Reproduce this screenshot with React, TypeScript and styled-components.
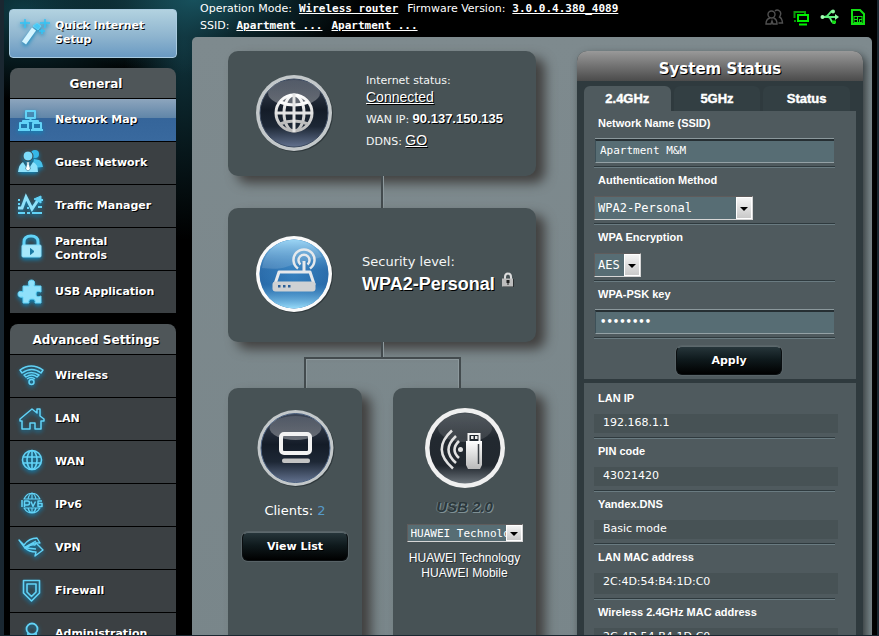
import React from 'react';
import styled, { createGlobalStyle, css } from 'styled-components';

const verdana = '"DejaVu Sans", Verdana, sans-serif';
const arial = '"Liberation Sans", Arial, sans-serif';
const mono = '"DejaVu Sans Mono", "Lucida Console", monospace';

const GlobalStyle = createGlobalStyle`
  * { box-sizing: border-box; }
  body { margin: 0; background: #000; color: #fff; font-family: ${verdana}; font-size: 11px; }
  h2, p, dl, dd, dt { margin: 0; }
  a { color: inherit; }
`;

/* ---------- frame ---------- */

const Frame = styled.div`
  display: flex;
  height: 100vh;
  overflow-y: auto;
  scrollbar-width: none;
  border: solid #1a2731;
  border-width: 0 2px 1px 4px;
  background:
    radial-gradient(ellipse 170px 75px at 190px 0, #17505c 0%, rgba(18, 60, 70, 0.6) 50%, transparent 100%),
    radial-gradient(ellipse 150px 90px at 20px 10px, #0e3a44 0%, transparent 100%),
    radial-gradient(ellipse 60px 200px at 180px 40px, #10343d 0%, transparent 100%),
    #000;
`;

const Sidebar = styled.aside`
  flex: none;
  width: 188px;
  padding: 9px 15px 0 6px;
`;

const Content = styled.div`
  flex: 1;
  min-width: 0;
  display: flex;
  flex-direction: column;
  padding-right: 5px;
`;

/* ---------- sidebar ---------- */

const navText = css`
  font-weight: bold;
  line-height: 14px;
  color: #fff;
  text-decoration: none;
  text-shadow: 1px 1px 0 #000;
`;

const QuickSetup = styled.a`
  ${navText}
  display: flex;
  align-items: center;
  gap: 9px;
  height: 49px;
  margin-left: -1px;
  padding: 0 20px 2px 10px;
  border: 1px solid #a9cbe0;
  border-radius: 4px;
  background: linear-gradient(#b2d2e0, #8fb5cf 55%, #6a9ac2);
  font-size: 11px;
`;

const NavGroup = styled.nav<{ $gap: number }>`
  margin: ${(p) => p.$gap}px 1px 0 0;
`;

const NavTitle = styled.h2`
  height: 30px;
  padding-left: 6px;
  border-radius: 8px 8px 0 0;
  background: #4f5659;
  text-align: center;
  font-size: 12px;
  line-height: 33px;
  text-shadow: 1px 1px 0 #000;
`;

const NavItem = styled.a<{ $active?: boolean }>`
  ${navText}
  display: flex;
  align-items: center;
  gap: 11px;
  height: 43px;
  padding: 0 16px 0 8px;
  border-top: 1px solid #000;
  background: ${(p) =>
    p.$active ? 'linear-gradient(#8da5bd, #5f85a8 46%, #35659a 46%, #39699e)' : '#3b4043'};
  font-size: 11px;
`;

const Glyph = styled.svg`
  flex: none;
  width: 26px;
  height: 30px;
  overflow: visible;
  fill: none;
  stroke: #62d3f7;
  stroke-width: 2;
  stroke-linejoin: round;
  filter: drop-shadow(0 2px 2px #0d86bb);
`;

const icons: Record<string, React.ReactNode> = {
  map: (
    <g>
      <rect x="8" y="6" width="9" height="7" />
      <path d="M12.5 13v4M5 19v-3h15v3" />
      <rect x="2" y="18" width="8" height="6" />
      <rect x="15" y="18" width="8" height="6" />
      <path d="M0 25h12M13 25h12" />
    </g>
  ),
  guest: (
    <g stroke="none">
      <circle cx="17" cy="6" r="4" fill="#35b8e8" />
      <path d="M14 20l2-9 5 1q3 1 4 7z" fill="#46bfe8" />
      <circle cx="10" cy="8" r="5" fill="#7cdcfb" stroke="#3b4043" strokeWidth="1" />
      <path d="M0 24q1-8 5-10l5 8 5-8q5 2 5 10z" fill="#8fe2fb" />
      <path d="M8.500 14h3l-.5 2 1.500 5-2.500 2-2.500-2 1.500-5z" fill="#fff" stroke="#2a6f8c" strokeWidth="0.6" />
    </g>
  ),
  traffic: (
    <g>
      <path d="M0 17h4l4-11 6 12 6-9" strokeWidth="3" stroke="#8fe2fb" strokeLinejoin="miter" />
      <path d="M16 8l7-3v7z" fill="#62d3f7" strokeWidth="1" />
      <path d="M0 22h7M9 22h3M14 22h10" />
      <path d="M0 9h2M0 13h2M20 16h4M23 9h2M9 17h2" />
    </g>
  ),
  parental: (
    <g>
      <path d="M6 13V8q0-6 7-6t7 6v5" strokeWidth="3" />
      <rect x="4" y="11" width="19" height="12" rx="1" fill="#a6e8fb" stroke="#8adffa" strokeWidth="1" />
      <path d="M12.500 14.500l3.500 3-3.500 3z" fill="#187aa5" stroke="#187aa5" strokeWidth="1" />
    </g>
  ),
  usb: (
    <path
      d="M5 9h6q-2-6 2.500-6t2.500 6h7v6q-5-2-5 2t5 2v7h-6q1-4-3-4t-3 4H5v-6q-5 1-5-3t5-2z"
      fill="#8fe0fa"
      stroke="#62d3f7"
      strokeWidth="1"
    />
  ),
  wireless: (
    <g strokeWidth="1.500">
      <path d="M2 9q11-8 23 0l-2 3q-9-7-19 0z" />
      <path d="M6 14q7-5 15 0l-2 2q-5-4-11 0z" />
      <path d="M9 18q4-3 8 0" />
      <circle cx="13.500" cy="21" r="2.500" />
    </g>
  ),
  lan: (
    <path
      d="M4 25V17H2v-2L14 5l5 4V5h3v7l4 3v2h-3v8h-6v-6h-5v6z"
      strokeWidth="1.500"
    />
  ),
  wan: (
    <g strokeWidth="1.600">
      <circle cx="14" cy="13" r="9.500" />
      <ellipse cx="14" cy="13" rx="5" ry="9.500" />
      <path d="M14 4v19M5 10h18M5 16h18" />
    </g>
  ),
  ipv6: (
    <g strokeWidth="1.200">
      <path d="M6 9q3-6 8-6t8 6zM10 9q1-5 4-6 3 1 4 6M6 18q3 5 8 5t8-5zM10 18q1 4 4 5 3-1 4-5M14 3v6M14 18v5" />
      <path d="M4 10v7M6.500 17v-6h3q2 0 2 2t-2 2h-3M13 11.500l2 5 2.500-5M24 11h-4v5.500h4v-3h-4" strokeWidth="1.500" />
    </g>
  ),
  vpn: (
    <g strokeWidth="1.400">
      <path d="M1 7l5 5q5-7 13-7l3 5q-8-1-12 4l-3 1z" />
      <path d="M7 15q5-4 10-3l1-2 7 7-8 6 1-4q-7 0-11-4z" />
      <path d="M7 14l11-6M8 15l10 1" />
    </g>
  ),
  firewall: (
    <g strokeWidth="1.600">
      <path d="M5.500 4.500h16v12.500l-8 8-8-8z" />
      <path d="M9 8h9v8l-4.500 4.500L9 16z" />
    </g>
  ),
  admin: (
    <g strokeWidth="1.800">
      <circle cx="14" cy="10" r="5.500" />
      <path d="M10 14v3q-6 2-6 8h20q0-6-6-8v-3" />
    </g>
  ),
};

type NavEntry = { label: string; icon: string; active?: boolean };

const general: NavEntry[] = [
  { label: 'Network Map', icon: 'map', active: true },
  { label: 'Guest Network', icon: 'guest' },
  { label: 'Traffic Manager', icon: 'traffic' },
  { label: 'Parental Controls', icon: 'parental' },
  { label: 'USB Application', icon: 'usb' },
];

const advanced: NavEntry[] = [
  { label: 'Wireless', icon: 'wireless' },
  { label: 'LAN', icon: 'lan' },
  { label: 'WAN', icon: 'wan' },
  { label: 'IPv6', icon: 'ipv6' },
  { label: 'VPN', icon: 'vpn' },
  { label: 'Firewall', icon: 'firewall' },
  { label: 'Administration', icon: 'admin' },
];

function NavSection({ title, items, gap }: { title: string; items: NavEntry[]; gap: number }) {
  return (
    <NavGroup $gap={gap}>
      <NavTitle>{title}</NavTitle>
      {items.map((item) => (
        <NavItem key={item.label} href="#" $active={item.active}>
          <Glyph viewBox="0 0 26 30">{icons[item.icon]}</Glyph>
          {item.label}
        </NavItem>
      ))}
    </NavGroup>
  );
}

/* ---------- top bar ---------- */

const TopBar = styled.header`
  flex: none;
  display: flex;
  justify-content: space-between;
  height: 37px;
  padding: 0 4px 0 8px;
  white-space: nowrap;
`;

const InfoLine = styled.p`
  display: flex;
  gap: 7px;
  line-height: 17px;
`;

const MonoLink = styled.a`
  margin-right: 2px;
  font-family: ${mono};
  font-weight: bold;
`;

const StatusIcons = styled.div`
  display: flex;
  gap: 8px;
  padding-top: 7px;
`;

const StatusIcon = styled.svg`
  width: 20px;
  height: 20px;
  fill: none;
  stroke: #12e012;
  stroke-width: 2;
`;

/* ---------- map ---------- */

const Main = styled.main`
  flex: 1 0 auto;
  display: flex;
  gap: 41px;
  padding: 14px 9px 0 36px;
  border-radius: 5px 5px 0 0;
  background: linear-gradient(#7e8a8e, #79868a);
`;

const MapColumn = styled.section`
  flex: 1;
  min-width: 0;
  display: flex;
  flex-direction: column;
`;

const cardBase = css`
  background: #475255;
  box-shadow: 9px 7px 12px #41403f;
`;

const NodeCard = styled.div<{ $height: number; $gap: number }>`
  ${cardBase}
  display: flex;
  align-items: center;
  gap: ${(p) => p.$gap}px;
  min-height: ${(p) => p.$height}px;
  padding: 0 10px 2px 26px;
  border-radius: 10px;
`;

const Stem = styled.div<{ $height: number }>`
  align-self: center;
  width: 3px;
  height: ${(p) => p.$height}px;
  border-right: 1px solid #8d999d;
  background: #434b4e;
`;

const Branch = styled.div`
  height: 31px;
  margin: 0 75px 0 76px;
  border: solid #434b4e;
  border-width: 2px 2px 0;
  box-shadow: inset 1px 1px 0 #8d999d, inset -1px 0 0 #8d999d;
`;

const Leaves = styled.div`
  flex: 1;
  display: grid;
  grid-template-columns: 134fr 143fr;
  gap: 31px;
`;

const Leaf = styled.div`
  ${cardBase}
  display: flex;
  flex-direction: column;
  align-items: center;
  min-width: 0;
  padding-top: 20px;
  border-radius: 10px 10px 0 0;
`;

const Disc = styled.svg`
  flex: none;
  width: 80px;
  height: 80px;
`;

const NodeText = styled.div`
  display: flex;
  flex-direction: column;
`;

const NodeLine = styled.p<{ $line: number; $size?: number }>`
  font-size: ${(p) => p.$size ?? 11}px;
  line-height: ${(p) => p.$line}px;
  color: #f4f6f6;
`;

const strongText = css`
  font-family: ${arial};
  font-weight: bold;
  font-size: 13px;
  color: #fff;
  text-shadow: 1px 1px 0 #000;
`;

const StrongLink = styled.a`
  ${strongText}
  font-size: 14px;
  font-weight: normal;
`;

const Strong = styled.strong`
  ${strongText}
`;

const Level = styled.p`
  ${strongText}
  display: flex;
  gap: 6px;
  font-size: 18px;
  line-height: 24px;
`;

const LockIcon = styled.svg`
  width: 14px;
  height: 16px;
`;

const Clients = styled.p`
  padding: 13px 0 12px;
  font-size: 13px;
  line-height: 19px;
`;

const Count = styled.span`
  color: #569ac9;
`;

const Button = styled.button`
  width: 106px;
  height: 29px;
  padding: 0;
  border: 1px solid #0a0e10;
  border-top-color: #5d696d;
  border-radius: 6px;
  background: linear-gradient(#26353a, #0f1a1d 45%, #000);
  box-shadow: 0 0 0 1px #586367;
  color: #fff;
  font: bold 11px ${verdana};
  text-shadow: 1px 1px 0 #000;
`;

const UsbLabel = styled.p`
  padding: 9px 0 7px;
  font: italic bold 15px/20px ${arial};
  color: #2b373b;
  text-shadow: 1px 1px 0 #7f9094, -1px 0 0 #65757a;
`;

const Device = styled.p`
  padding-top: 9px;
  font: 12px/15px ${arial};
  text-align: center;
  text-shadow: 1px 1px 0 #2b3235;
`;

/* ---------- form parts ---------- */

const SelectBox = styled.div<{ $width: number; $height: number }>`
  display: grid;
  grid-template-columns: 1fr 16px;
  width: ${(p) => p.$width}px;
  height: ${(p) => p.$height}px;
  border: 1px solid;
  border-color: #5f5c5c #d6d6d6 #d6d6d6 #5f5c5c;
  background: #576d74;
`;

const NativeSelect = styled.select<{ $size: number }>`
  grid-area: 1 / 1 / 2 / 3;
  width: 100%;
  min-width: 0;
  height: 100%;
  padding: 0 16px 0 3px;
  border: 0;
  appearance: none;
  background: transparent;
  color: #fff;
  font: ${(p) => p.$size}px ${mono};
`;

const Arrow = styled.svg`
  grid-area: 1 / 2 / 2 / 3;
  width: 16px;
  height: 100%;
  border: 1px solid #fff;
  background: linear-gradient(#f4f4f4, #c9c9c9);
  pointer-events: none;
`;

type SelectProps = { id: string; label?: string; value: string; width: number; height: number; size: number };

function Select({ id, label, value, width, height, size }: SelectProps) {
  return (
    <SelectBox $width={width} $height={height}>
      <NativeSelect id={id} aria-label={label} $size={size}>
        <option>{value}</option>
      </NativeSelect>
      <Arrow viewBox="0 0 14 14">
        <path d="M3 6h8l-4 4z" fill="#000" />
      </Arrow>
    </SelectBox>
  );
}

/* ---------- system status ---------- */

const Status = styled.section`
  flex: none;
  width: 286px;
  border-radius: 10px 10px 0 0;
  background: #2f3a3e;
  box-shadow: 3px 4px 9px #33393b;
`;

const StatusTitle = styled.h2`
  height: 30px;
  border-radius: 10px 10px 0 0;
  background: linear-gradient(#999, #4b4b4b);
  text-align: center;
  font-size: 15px;
  line-height: 37px;
  text-shadow: 1px 1px 0 #000;
`;

const Tabs = styled.div`
  display: flex;
  gap: 3px;
  padding: 5px 13px 0 7px;
`;

const Tab = styled.button<{ $active?: boolean }>`
  flex: 1;
  height: 25px;
  padding: 0;
  border: 0;
  border-radius: 6px 6px 0 0;
  background: ${(p) => (p.$active ? '#4f5a5e' : '#333f43')};
  color: #fff;
  font: bold 13px ${arial};
  -webkit-text-stroke: 0.4px #fff;
`;

const Block = styled.div<{ $top?: number }>`
  margin: 0 7px 4px;
  padding: ${(p) => p.$top ?? 0}px 21px 0 10px;
  background: #4f5a5e;
`;

const Row = styled.div`
  padding: 5px 0 3px;
  border-bottom: 1px solid #6a7b81;
  box-shadow: inset 0 -1px 0 #2f3a3e;
`;

const labelText = css`
  display: block;
  padding-left: 4px;
  font: bold 11px/15px ${arial};
  color: #fff;
`;

const Label = styled.label`
  ${labelText}
`;

const FieldSlot = styled.div`
  padding: 8px 0 1px;
`;

const TextInput = styled.input`
  display: block;
  width: calc(100% - 2px);
  height: 24px;
  margin-left: 1px;
  padding: 0 4px 2px;
  border: solid;
  border-width: 2px 0 1px 1px;
  border-color: #262f33 #8b989c #94a1a5 #3d5058;
  border-radius: 0;
  outline: 0;
  background: #576d74;
  box-shadow: 0 -1px 0 #8b989c;
  color: #fff;
  font: 11px ${mono};

  &[type='password'] {
    font: bold 10px ${verdana};
  }
`;

const ApplySlot = styled.div`
  display: flex;
  justify-content: center;
  padding: 7px 0 4px 29px;
`;

const Term = styled.dt`
  ${labelText}
`;

const Value = styled.dd<{ $tall?: boolean }>`
  height: ${(p) => (p.$tall ? 21 : 19)}px;
  margin: 8px -3px 2px 0;
  padding-left: 9px;
  background: #475255;
  font-size: 11px;
  line-height: 18px;
`;

const facts = [
  { term: 'LAN IP', value: '192.168.1.1' },
  { term: 'PIN code', value: '43021420' },
  { term: 'Yandex.DNS', value: 'Basic mode' },
  { term: 'LAN MAC address', value: '2C:4D:54:B4:1D:C0', tall: true },
  { term: 'Wireless 2.4GHz MAC address', value: '2C:4D:54:B4:1D:C0', tall: true },
];

function Gradients() {
  return (
    <defs>
      <linearGradient id="dark" x1="0" y1="0" x2="0" y2="1">
        <stop offset="0" stopColor="#3d4656" />
        <stop offset="0.45" stopColor="#141c28" />
        <stop offset="0.7" stopColor="#1d2735" />
        <stop offset="1" stopColor="#62718e" />
      </linearGradient>
      <linearGradient id="gloss" x1="0" y1="0" x2="0" y2="1">
        <stop offset="0" stopColor="#fff" stopOpacity="0.12" />
        <stop offset="1" stopColor="#fff" stopOpacity="0.35" />
      </linearGradient>
      <radialGradient id="blue" cx="0.5" cy="0.5" r="0.5">
        <stop offset="0" stopColor="#2d78b8" />
        <stop offset="1" stopColor="#1f5c9c" />
      </radialGradient>
      <linearGradient id="sky" x1="0" y1="0" x2="0" y2="1">
        <stop offset="0" stopColor="#8ed0f4" />
        <stop offset="0.45" stopColor="#4c96cf" stopOpacity="0.3" />
        <stop offset="0.65" stopColor="#3f8cc8" stopOpacity="0.3" />
        <stop offset="1" stopColor="#98dcfa" />
      </linearGradient>
      <linearGradient id="silver" x1="0" y1="0" x2="0" y2="1">
        <stop offset="0" stopColor="#fff" />
        <stop offset="1" stopColor="#b9b9b9" />
      </linearGradient>
      <linearGradient id="black" x1="0" y1="0" x2="0" y2="1">
        <stop offset="0" stopColor="#4a5157" />
        <stop offset="0.35" stopColor="#222930" />
        <stop offset="0.75" stopColor="#22282f" />
        <stop offset="1" stopColor="#6c747b" />
      </linearGradient>
    </defs>
  );
}

export default function App() {
  return (
    <Frame>
      <GlobalStyle />
      <Sidebar>
        <QuickSetup href="#">
          <Glyph viewBox="0 0 26 30">
            <path d="M4 25L14 11" stroke="#d4f5ff" strokeWidth="5" />
            <path d="M13 8l4-3 4 3-3 4z" fill="#48c8f5" strokeWidth="1" />
            <path d="M5 1v9M0 5h10M25 1v9M20 5h10M22 11v5M19 13h6" strokeWidth="1.500" stroke="#35c3f5" />
          </Glyph>
          Quick Internet Setup
        </QuickSetup>
        <NavSection title="General" items={general} gap={10} />
        <NavSection title="Advanced Settings" items={advanced} gap={11} />
      </Sidebar>

      <Content>
        <TopBar>
          <div>
            <InfoLine>
              Operation Mode: <MonoLink href="#">Wireless router</MonoLink>
              Firmware Version: <MonoLink href="#">3.0.0.4.380_4089</MonoLink>
            </InfoLine>
            <InfoLine>
              SSID: <MonoLink href="#">Apartment ...</MonoLink>
              <MonoLink href="#">Apartment ...</MonoLink>
            </InfoLine>
          </div>
          <StatusIcons>
            <StatusIcon viewBox="0 0 20 20">
              <g stroke="#505050" strokeWidth="1.400">
                <circle cx="7.500" cy="7.500" r="3.500" />
                <path d="M6 11q-4 1-4 6h5l1-3 1 3h4q0-5-3.500-6M11 4q2-2 4.500 0t0 6q2.500 1 3 6h-4" />
              </g>
            </StatusIcon>
            <StatusIcon viewBox="0 0 20 20">
              <path d="M2.500 11V5H13v2" stroke="#0a9a0a" />
              <path d="M2 14h2" stroke="#0a8a0a" />
              <rect x="6" y="8" width="10" height="6" stroke="#00f000" />
              <path d="M7 17.500h8" stroke="#00f000" />
            </StatusIcon>
            <StatusIcon viewBox="0 0 20 20">
              <path d="M2 10h14M4 10q3 0 5-3t4-3M8 10q2 0 3 3t4 3" stroke="#5cf07c" strokeWidth="1.800" />
              <circle cx="2.500" cy="10" r="2" fill="#a4ffb4" stroke="none" />
              <circle cx="13" cy="4.500" r="2" fill="#8cf8a0" stroke="none" />
              <path d="M15 7l4 3-4 3z" fill="#8cf8a0" stroke="none" />
              <rect x="12" y="13.500" width="4" height="3" fill="#12e012" stroke="none" />
            </StatusIcon>
            <StatusIcon viewBox="0 0 20 20">
              <path d="M4 3h8l4 4v10H4z" />
              <rect x="6" y="9.500" width="8" height="6" strokeWidth="1" />
              <path d="M6 12.500h3M11 12.500h3M9.500 10v5M11.500 12v3" strokeWidth="1" />
            </StatusIcon>
          </StatusIcons>
        </TopBar>

        <Main>
          <MapColumn>
            <NodeCard $height={125} $gap={32}>
              <Disc viewBox="0 0 80 80">
                <Gradients />
                <circle cx="41" cy="41" r="38" fill="#20282b" opacity="0.6" />
                <circle cx="40" cy="40" r="38" fill="#c3c8ca" />
                <circle cx="40" cy="40" r="34" fill="url(#dark)" stroke="#3c4a60" />
                <ellipse cx="40" cy="20" rx="26" ry="13" fill="url(#gloss)" />
                <g fill="none" stroke="url(#silver)" strokeWidth="3">
                  <circle cx="40" cy="40" r="18" />
                  <ellipse cx="40" cy="40" rx="10" ry="18" />
                  <path d="M26 29q14 6 28 0M26 51q14-6 28 0" />
                </g>
                <path d="M38.500 21h3v38h-3zM21 38.500h38v3H21z" fill="#e4e4e4" />
              </Disc>
              <NodeText>
                <NodeLine $line={14}>Internet status:</NodeLine>
                <NodeLine $line={18}><StrongLink href="#">Connected</StrongLink></NodeLine>
                <NodeLine $line={21}>WAN IP: <Strong>90.137.150.135</Strong></NodeLine>
                <NodeLine $line={21}>DDNS: <StrongLink href="#">GO</StrongLink></NodeLine>
              </NodeText>
            </NodeCard>
            <Stem $height={32} />
            <NodeCard $height={134} $gap={28}>
              <Disc viewBox="0 0 80 80">
                <circle cx="41" cy="41" r="38" fill="#20282b" opacity="0.6" />
                <circle cx="40" cy="40" r="38" fill="#fafafa" />
                <circle cx="40" cy="40" r="34.500" fill="url(#blue)" />
                <circle cx="40" cy="40" r="34.500" fill="url(#sky)" />
                <path d="M8 34a32 32 0 0 1 60-11Q40 30 32 33T8 34z" fill="#fff" opacity="0.13" />
                <g fill="none" stroke="#e6e9ec" strokeWidth="3">
                  <path d="M25 38h31l4 12H21z" strokeLinejoin="round" />
                  <path d="M50 27v11" />
                  <path d="M46.500 30.500a5.500 5.500 0 1 1 7 0" strokeWidth="2.500" />
                  <path d="M44 34.500a10.500 10.500 0 1 1 12 0" strokeWidth="2.500" />
                </g>
                <rect x="18.500" y="47.500" width="43" height="10" rx="3" fill="#cfd1d3" />
                <path d="M24 51h2.500v2.500H24zM29 51h2.500v2.500H29zM34 51h2.500v2.500H34z" fill="#2a5f98" />
              </Disc>
              <NodeText>
                <NodeLine $line={20} $size={13}>Security level:</NodeLine>
                <Level>
                  WPA2-Personal
                  <LockIcon viewBox="0 0 14 16">
                    <path d="M4 8V5q0-3.500 3-3.500T10 5v3" fill="none" stroke="#ddd" strokeWidth="2" />
                    <rect x="2" y="7" width="11" height="8" fill="#2b2f31" />
                    <rect x="1" y="6.500" width="11" height="8" fill="#bdbdbd" />
                    <path d="M5.500 8h3v3h-1v2h-1v-2h-1z" fill="#222" />
                  </LockIcon>
                </Level>
              </NodeText>
            </NodeCard>
            <Stem $height={15} />
            <Branch />
            <Leaves>
              <Leaf>
                <Disc viewBox="0 0 80 80">
                  <circle cx="41.500" cy="41" r="38" fill="#20282b" opacity="0.6" />
                  <circle cx="40.500" cy="40" r="38" fill="#c3c8ca" />
                  <circle cx="40.500" cy="40" r="34.500" fill="url(#dark)" stroke="#4a6080" />
                  <ellipse cx="40.500" cy="20" rx="26" ry="12" fill="url(#gloss)" />
                  <rect x="26" y="26" width="29" height="19" rx="3" fill="none" stroke="#f2f2f2" strokeWidth="4" />
                  <rect x="27" y="50.500" width="28" height="4.500" rx="2" fill="#c4c4c4" />
                </Disc>
                <Clients>
                  Clients: <Count>2</Count>
                </Clients>
                <Button type="button">View List</Button>
              </Leaf>
              <Leaf>
                <Disc viewBox="0 0 80 80">
                  <circle cx="40" cy="40" r="40" fill="#f0f0f0" />
                  <circle cx="40" cy="40" r="35.500" fill="url(#black)" />
                  <ellipse cx="40" cy="20" rx="27" ry="14" fill="url(#gloss)" opacity="0.4" />
                  <g fill="none" stroke="#e2e2e2" strokeWidth="2.600">
                    <path d="M27 22.500q-21 19 1 38" />
                    <path d="M31 28q-15 14 0 27" />
                    <path d="M34 33q-9 9 0 17" />
                  </g>
                  <circle cx="35.500" cy="41.500" r="2.500" fill="#e2e2e2" />
                  <path d="M43.500 26h11v8h-11z" fill="#222930" stroke="#f2f2f2" strokeWidth="2" />
                  <path d="M46 28h2.500v3H46zM50 28h2.500v3H50z" fill="#eee" />
                  <path d="M41 33h16v24l-2 4H43l-2-4z" fill="url(#silver)" />
                  <path d="M53.500 36v20" stroke="#3a3f44" strokeWidth="1.500" />
                </Disc>
                <UsbLabel>USB 2.0</UsbLabel>
                <Select id="usb-device" label="USB device" value="HUAWEI Technology" width={116} height={18} size={11} />
                <Device>
                  HUAWEI Technology
                  <br />
                  HUAWEI Mobile
                </Device>
              </Leaf>
            </Leaves>
          </MapColumn>

          <Status>
            <StatusTitle>System Status</StatusTitle>
            <Tabs role="tablist">
              <Tab type="button" role="tab" aria-selected $active>2.4GHz</Tab>
              <Tab type="button" role="tab">5GHz</Tab>
              <Tab type="button" role="tab">Status</Tab>
            </Tabs>
            <Block>
              <Row>
                <Label htmlFor="ssid">Network Name (SSID)</Label>
                <FieldSlot><TextInput id="ssid" type="text" defaultValue="Apartment M&M" /></FieldSlot>
              </Row>
              <Row>
                <Label htmlFor="auth">Authentication Method</Label>
                <FieldSlot><Select id="auth" value="WPA2-Personal" width={159} height={24} size={12} /></FieldSlot>
              </Row>
              <Row>
                <Label htmlFor="encryption">WPA Encryption</Label>
                <FieldSlot><Select id="encryption" value="AES" width={47} height={24} size={12} /></FieldSlot>
              </Row>
              <Row>
                <Label htmlFor="psk">WPA-PSK key</Label>
                <FieldSlot><TextInput id="psk" type="password" defaultValue="password" /></FieldSlot>
              </Row>
              <ApplySlot>
                <Button type="button">Apply</Button>
              </ApplySlot>
            </Block>
            <Block as="dl" $top={3}>
              {facts.map((fact) => (
                <Row key={fact.term}>
                  <Term>{fact.term}</Term>
                  <Value $tall={fact.tall}>{fact.value}</Value>
                </Row>
              ))}
            </Block>
          </Status>
        </Main>
      </Content>
    </Frame>
  );
}
